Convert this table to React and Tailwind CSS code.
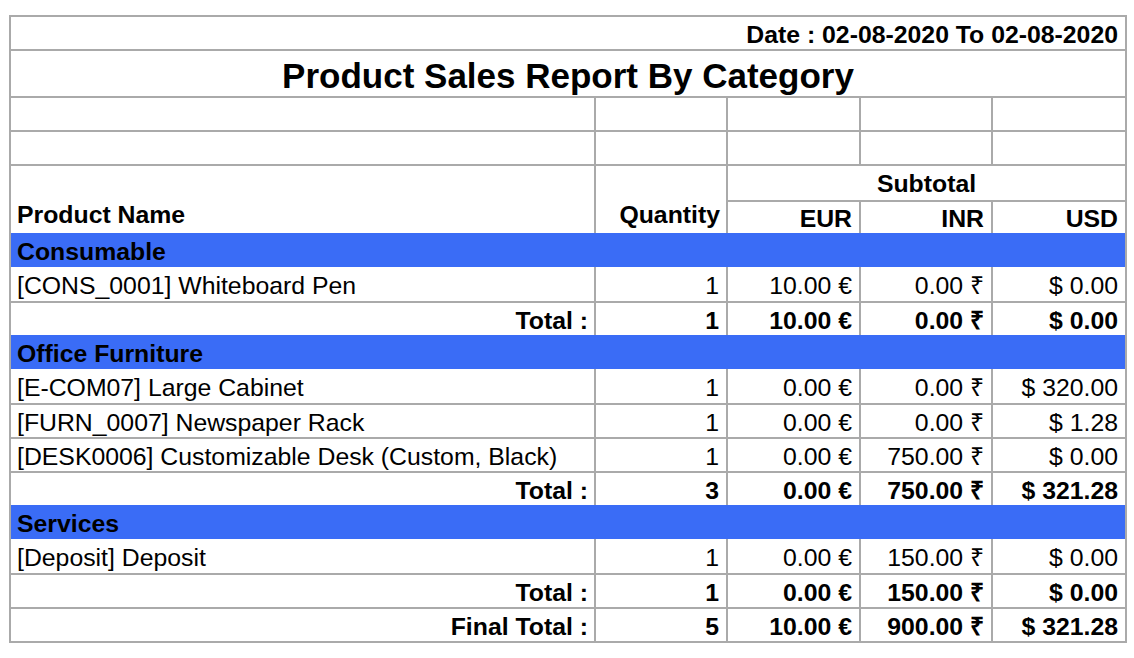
const cols = "grid grid-cols-[583px_132px_133px_132px_134px]";

const categories = [
    {
        name: "Consumable",
        lines: [
            { name: "[CONS_0001] Whiteboard Pen", qty: "1", eur: "10.00 €", inr: "0.00 ₹", usd: "$ 0.00" },
        ],
        total: { qty: "1", eur: "10.00 €", inr: "0.00 ₹", usd: "$ 0.00" },
    },
    {
        name: "Office Furniture",
        lines: [
            { name: "[E-COM07] Large Cabinet", qty: "1", eur: "0.00 €", inr: "0.00 ₹", usd: "$ 320.00" },
            { name: "[FURN_0007] Newspaper Rack", qty: "1", eur: "0.00 €", inr: "0.00 ₹", usd: "$ 1.28" },
            { name: "[DESK0006] Customizable Desk (Custom, Black)", qty: "1", eur: "0.00 €", inr: "750.00 ₹", usd: "$ 0.00" },
        ],
        total: { qty: "3", eur: "0.00 €", inr: "750.00 ₹", usd: "$ 321.28" },
    },
    {
        name: "Services",
        lines: [
            { name: "[Deposit] Deposit", qty: "1", eur: "0.00 €", inr: "150.00 ₹", usd: "$ 0.00" },
        ],
        total: { qty: "1", eur: "0.00 €", inr: "150.00 ₹", usd: "$ 0.00" },
    },
];

const Row = ({ label, values, bold, first }) => (
    <div className={`${cols} h-[34px] ${first ? "" : "border-t-2 border-[#aaa]"} ${bold ? "font-bold" : ""}`}>
        <div className={`px-[6px] pt-[5px] flex items-center ${bold ? "justify-end" : ""}`}>{label}</div>
        {values.map((v, i) => (
            <div key={i} className="border-l-2 border-[#aaa] px-[7px] pt-[5px] flex items-center justify-end">
                {v}
            </div>
        ))}
    </div>
);

const App = () => {
    return (
        <div className="min-h-screen bg-white pt-[15px] pl-[9px] text-black text-[24.8px] leading-none font-['Liberation_Sans',Arial,sans-serif]">
            <div className="w-[1118px] border-2 border-[#aaa]">
                <div className="h-[32px] px-[7px] pt-[5px] flex items-center justify-end font-bold">
                    Date : 02-08-2020 To 02-08-2020
                </div>
                <div className="h-[47px] border-t-2 border-[#aaa] pt-[4px] flex items-center justify-center font-bold text-[35px]">
                    Product Sales Report By Category
                </div>
                {[0, 1].map((r) => (
                    <div key={r} className={`${cols} h-[34px] border-t-2 border-[#aaa]`}>
                        <div></div>
                        <div className="border-l-2 border-[#aaa]"></div>
                        <div className="border-l-2 border-[#aaa]"></div>
                        <div className="border-l-2 border-[#aaa]"></div>
                        <div className="border-l-2 border-[#aaa]"></div>
                    </div>
                ))}
                <div className={`${cols} grid-rows-[34px_33px] border-t-2 border-[#aaa] font-bold`}>
                    <div className="row-span-2 px-[6px] flex items-end pb-[5px]">Product Name</div>
                    <div className="row-span-2 border-l-2 border-[#aaa] px-[6px] flex items-end justify-end pb-[5px]">Quantity</div>
                    <div className="col-span-3 border-l-2 border-[#aaa] pt-[2px] flex items-center justify-center">Subtotal</div>
                    <div className="border-l-2 border-t-2 border-[#aaa] px-[7px] pt-[3px] flex items-center justify-end">EUR</div>
                    <div className="border-l-2 border-t-2 border-[#aaa] px-[7px] pt-[3px] flex items-center justify-end">INR</div>
                    <div className="border-l-2 border-t-2 border-[#aaa] px-[7px] pt-[3px] flex items-center justify-end">USD</div>
                </div>
                {categories.map((cat) => (
                    <div key={cat.name}>
                        <div className="h-[34px] bg-[#3a6cf6] px-[6px] pt-[5px] flex items-center font-bold">{cat.name}</div>
                        {cat.lines.map((l, i) => (
                            <Row key={l.name} first={i === 0} label={l.name} values={[l.qty, l.eur, l.inr, l.usd]} />
                        ))}
                        <Row bold label="Total :" values={[cat.total.qty, cat.total.eur, cat.total.inr, cat.total.usd]} />
                    </div>
                ))}
                <Row bold label="Final Total :" values={["5", "10.00 €", "900.00 ₹", "$ 321.28"]} />
            </div>
        </div>
    );
};

export default App;
